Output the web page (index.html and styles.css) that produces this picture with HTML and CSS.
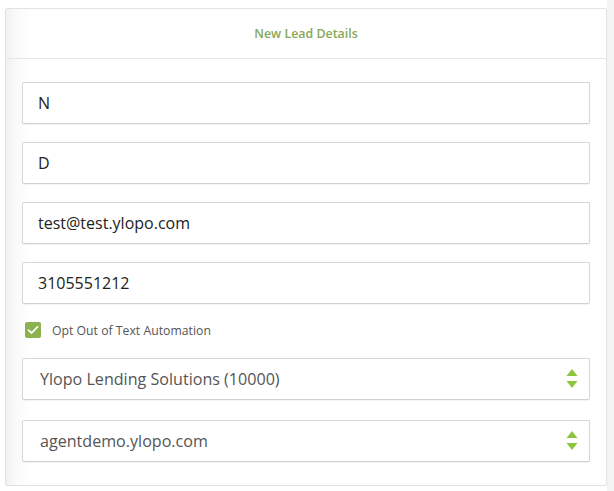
FILE: index.html
```html
<!DOCTYPE html>
<html>
<head>
<meta charset="utf-8">
<link rel="stylesheet" href="styles.css">
</head>
<body>
<div class="page">
  <div class="main">
    <div class="card">
      <div class="card-header">New Lead Details</div>
      <div class="card-body">
        <div class="field">N</div>
        <div class="field">D</div>
        <div class="field">test@test.ylopo.com</div>
        <div class="field">3105551212</div>
        <label class="check-row">
          <span class="checkbox">
            <svg width="12" height="10" viewBox="0 0 12 10"><path d="M1.5 5.2 L4.6 8 L10.5 1.8" fill="none" stroke="#fff" stroke-width="1.8" stroke-linecap="round" stroke-linejoin="round"/></svg>
          </span>
          <span class="check-label">Opt Out of Text Automation</span>
        </label>
        <div class="field select">
          <span>Ylopo Lending Solutions (10000)</span>
          <svg class="arrows" width="12" height="20" viewBox="0 0 12 20"><path d="M6 0 L11.5 7 L0.5 7 Z M0.5 12 L11.5 12 L6 19 Z" fill="#8cc540"/></svg>
        </div>
        <div class="field select">
          <span>agentdemo.ylopo.com</span>
          <svg class="arrows" width="12" height="20" viewBox="0 0 12 20"><path d="M6 0 L11.5 7 L0.5 7 Z M0.5 12 L11.5 12 L6 19 Z" fill="#8cc540"/></svg>
        </div>
      </div>
    </div>
  </div>
  <div class="side"></div>
</div>
</body>
</html>
```
FILE: styles.css
```css
html, body {
  margin: 0;
  padding: 0;
  background: #fff;
  font-family: "Open Sans", "Liberation Sans", sans-serif;
}
.page {
  display: flex;
  width: 614px;
  height: 491px;
  overflow: hidden;
}
.main {
  width: 607px;
  padding: 8px 0 0 5px;
  box-sizing: border-box;
}
.side {
  flex: 1;
  background: #f3f3f3;
}
.card {
  width: 602px;
  height: 478px;
  box-sizing: border-box;
  border: 1px solid #e2e2e2;
  border-radius: 2px;
  background: linear-gradient(to right, #f1f1f1 0px, #fafafa 10px, #fff 26px);
}
.card-header {
  height: 49px;
  border-bottom: 1px solid #e6e6e6;
  display: flex;
  align-items: center;
  justify-content: center;
  font-size: 12.4px;
  font-weight: 600;
  color: #86a85a;
}
.card-body {
  padding: 23px 16px 0 16px;
  display: flex;
  flex-direction: column;
}
.field {
  height: 42px;
  box-sizing: border-box;
  border: 1px solid #d6d6d6;
  border-bottom-color: #d0d0d0;
  border-radius: 2px;
  background: #fff;
  box-shadow: 0 1px 1px rgba(0,0,0,0.05);
  padding: 0 15px;
  display: flex;
  align-items: center;
  font-size: 16px;
  color: #222;
  margin-bottom: 18px;
}
.check-row {
  display: flex;
  align-items: center;
  height: 16px;
  margin: 0 0 20px 3px;
}
.checkbox {
  width: 16px;
  height: 16px;
  border-radius: 2px;
  background: #8db14f;
  display: flex;
  align-items: center;
  justify-content: center;
}
.check-label {
  margin-left: 11px;
  font-size: 12.25px;
  color: #555;
}
.select {
  justify-content: space-between;
  padding: 0 11px 0 17px;
  color: #555;
  font-size: 16.1px;
  margin-bottom: 20px;
}
.arrows {
  display: block;
}
```
